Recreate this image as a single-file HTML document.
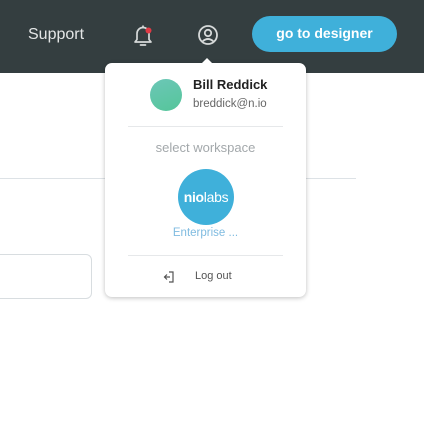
<html><head><style>
body{margin:0;width:424px;height:438px;background:#fff;position:relative;overflow:hidden;font-family:"Liberation Sans",sans-serif}
.hdr{position:absolute;left:0;top:0;width:424px;height:73px;background:#343e40}
.abs{position:absolute}
</style></head><body>
<div class="hdr"></div>
<div class="abs" style="left:28px;top:26px;color:#e4e6e6;font-size:16px">Support</div>
<svg class="abs" style="left:129px;top:21px" width="28" height="28" viewBox="0 0 28 28">
<path d="M6 21 h16 l-2-2.5 v-6 a6 6 0 0 0-12 0 v6 z" fill="none" stroke="#d6d9d9" stroke-width="1.7" stroke-linejoin="round"/>
<path d="M11.5 24 h5" stroke="#d6d9d9" stroke-width="1.7" stroke-linecap="round"/>
<path d="M14 6.5 v-2" stroke="#d6d9d9" stroke-width="1.7"/>
<circle cx="19.5" cy="9.5" r="3" fill="#e03a45"/></svg>
<svg class="abs" style="left:197px;top:24px" width="22" height="22" viewBox="0 0 22 22">
<circle cx="11" cy="11" r="9" fill="none" stroke="#d6d9d9" stroke-width="1.8"/>
<circle cx="11" cy="9" r="3.2" fill="none" stroke="#d6d9d9" stroke-width="1.8"/>
<path d="M5.5 17.5 q5.5-5 11 0" fill="none" stroke="#d6d9d9" stroke-width="1.8"/></svg>
<div class="abs" style="left:252px;top:16px;width:145px;height:36px;border-radius:18px;background:#3fb0da;color:#fff;font-size:14px;font-weight:bold;text-align:center;line-height:34px">go to designer</div>
<div class="abs" style="left:0;top:178px;width:356px;height:1px;background:#dde2e6"></div>
<div class="abs" style="left:-10px;top:254px;width:100px;height:43px;border:1px solid #d8dde0;border-radius:6px"></div>
<div class="abs" style="left:105px;top:63px;width:201px;height:234px;background:#fff;border-radius:7px;box-shadow:0 1px 5px rgba(0,0,0,.25)"></div>
<div class="abs" style="left:200px;top:58px;width:0;height:0;border-left:7px solid transparent;border-right:7px solid transparent;border-bottom:7px solid #fff"></div>
<div class="abs" style="left:150px;top:79px;width:32px;height:32px;border-radius:50%;background:linear-gradient(160deg,#6cc7b7,#55c59a)"></div>
<div class="abs" style="left:193px;top:77px;font-size:13px;font-weight:bold;color:#222">Bill Reddick</div>
<div class="abs" style="left:193px;top:98px;font-size:11.5px;color:#666">breddick@n.io</div>
<div class="abs" style="left:128px;top:126px;width:155px;height:1px;background:#e6e8ea"></div>
<div class="abs" style="left:105px;top:140px;width:201px;text-align:center;font-size:13px;color:#a3a8ab">select workspace</div>
<div class="abs" style="left:178px;top:169px;width:56px;height:56px;border-radius:50%;background:#3fb0da;color:#fff;font-weight:bold;font-size:14px;text-align:center;line-height:56px;letter-spacing:-0.3px">nio<span style="font-weight:normal">labs</span></div>
<div class="abs" style="left:105px;top:227px;width:201px;text-align:center;font-size:11.5px;color:#7fbbe0">Enterprise ...</div>
<div class="abs" style="left:128px;top:255px;width:155px;height:1px;background:#e6e8ea"></div>
<svg class="abs" style="left:162px;top:270px" width="14" height="14" viewBox="0 0 14 14">
<path d="M7 2 h4 v10 h-4" fill="none" stroke="#555" stroke-width="1.2"/><path d="M2 7 h6 M5 4.5 l-2.5 2.5 2.5 2.5" fill="none" stroke="#555" stroke-width="1.2"/></svg>
<div class="abs" style="left:195px;top:270px;font-size:11px;color:#555">Log out</div>
</body></html>
